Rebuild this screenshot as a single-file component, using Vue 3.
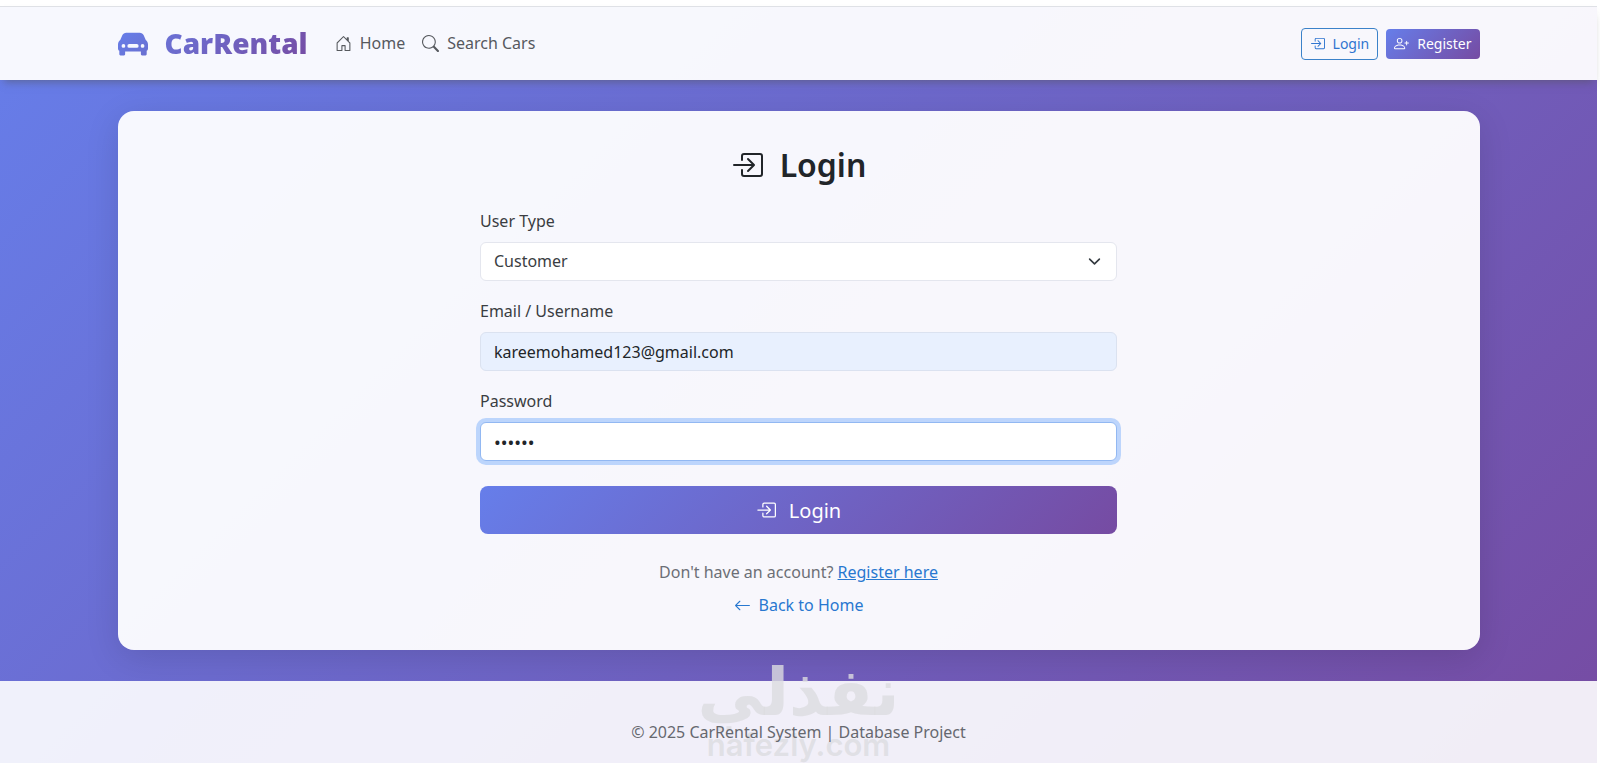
<script setup>
import { ref } from 'vue';

const userType = ref('customer');
const username = ref('kareemohamed123@gmail.com');
const password = ref('secret');

const icons = {
  car: 'M4.4 2h7.2c.9 0 1.7.5 2.1 1.3L14.8 5.9c.6.5 1.2 1.3 1.2 2.4v2.1c0 .6-.3 1-.7 1.2v1.9a.6.6 0 0 1-.6.6h-1.9a.6.6 0 0 1-.6-.6V12H3.8v1.5a.6.6 0 0 1-.6.6H1.3a.6.6 0 0 1-.6-.6v-1.9c-.4-.2-.7-.6-.7-1.2V8.3c0-1.1.6-1.9 1.2-2.4L2.3 3.3C2.7 2.5 3.5 2 4.4 2zM2.9 10a1 1 0 1 0 0-2 1 1 0 0 0 0 2m10.2 0a1 1 0 1 0 0-2 1 1 0 0 0 0 2M6 8a1 1 0 0 0 0 2h4a1 1 0 1 0 0-2z',
  house:
    'M8.354 1.146a.5.5 0 0 0-.708 0l-6 6A.5.5 0 0 0 1.5 7.5v7a.5.5 0 0 0 .5.5h4.5a.5.5 0 0 0 .5-.5v-4h2v4a.5.5 0 0 0 .5.5H14a.5.5 0 0 0 .5-.5v-7a.5.5 0 0 0-.146-.354L13 5.793V2.5a.5.5 0 0 0-.5-.5h-1a.5.5 0 0 0-.5.5v1.293zM2.5 14V7.707l5.5-5.5 5.5 5.5V14H10v-4a.5.5 0 0 0-.5-.5h-3a.5.5 0 0 0-.5.5v4z',
  search:
    'M11.742 10.344a6.5 6.5 0 1 0-1.397 1.398h-.001q.044.06.098.115l3.85 3.85a1 1 0 0 0 1.415-1.414l-3.85-3.85a1 1 0 0 0-.115-.1zM12 6.5a5.5 5.5 0 1 1-11 0 5.5 5.5 0 0 1 11 0',
  login:
    'M6 3.5a.5.5 0 0 1 .5-.5h8a.5.5 0 0 1 .5.5v9a.5.5 0 0 1-.5.5h-8a.5.5 0 0 1-.5-.5v-2a.5.5 0 0 0-1 0v2A1.5 1.5 0 0 0 6.5 14h8a1.5 1.5 0 0 0 1.5-1.5v-9A1.5 1.5 0 0 0 14.5 2h-8A1.5 1.5 0 0 0 5 3.5v2a.5.5 0 0 0 1 0zM11.854 8.354a.5.5 0 0 0 0-.708l-3-3a.5.5 0 1 0-.708.708L10.293 7.5H1.5a.5.5 0 0 0 0 1h8.793l-2.147 2.146a.5.5 0 0 0 .708.708z',
  personPlus:
    'M6 8a3 3 0 1 0 0-6 3 3 0 0 0 0 6m2-3a2 2 0 1 1-4 0 2 2 0 0 1 4 0m4 8c0 1-1 1-1 1H1s-1 0-1-1 1-4 6-4 6 3 6 4m-1-.004c-.001-.246-.154-.986-.832-1.664C9.516 10.68 8.289 10 6 10s-3.516.68-4.168 1.332c-.678.678-.83 1.418-.832 1.664zM13.5 5a.5.5 0 0 1 .5.5V7h1.5a.5.5 0 0 1 0 1H14v1.5a.5.5 0 0 1-1 0V8h-1.5a.5.5 0 0 1 0-1H13V5.5a.5.5 0 0 1 .5-.5',
  arrowLeft:
    'M15 8a.5.5 0 0 0-.5-.5H2.707l3.147-3.146a.5.5 0 1 0-.708-.708l-4 4a.5.5 0 0 0 0 .708l4 4a.5.5 0 0 0 .708-.708L2.707 8.5H14.5A.5.5 0 0 0 15 8',
};
</script>

<template>
  <div class="page">
    <!-- Navbar -->
    <header class="navbar">
      <div class="container nav-row">
        <a href="#" class="brand">
          <svg class="brand-icon" viewBox="0 0 16 16" aria-hidden="true">
            <defs>
              <linearGradient id="brandFill" x1="0" y1="0" x2="1" y2="1">
                <stop offset="0" stop-color="#667eea" />
                <stop offset="1" stop-color="#6a70d0" />
              </linearGradient>
            </defs>
            <path :d="icons.car" fill="url(#brandFill)" fill-rule="evenodd" />
          </svg>
          <span class="brand-text">CarRental</span>
        </a>
        <nav class="nav-links">
          <a href="#" class="nav-link">
            <svg class="icon" viewBox="0 0 16 16"><path :d="icons.house" /></svg>
            Home
          </a>
          <a href="#" class="nav-link">
            <svg class="icon" viewBox="0 0 16 16"><path :d="icons.search" /></svg>
            Search Cars
          </a>
        </nav>
        <div class="nav-actions">
          <a href="#" class="btn-sm btn-outline">
            <svg class="icon" viewBox="0 0 16 16"><path :d="icons.login" /></svg>
            Login
          </a>
          <a href="#" class="btn-sm btn-gradient">
            <svg class="icon" viewBox="0 0 16 16"><path :d="icons.personPlus" /></svg>
            Register
          </a>
        </div>
      </div>
    </header>

    <!-- Login card -->
    <main class="container card">
      <h2 class="title">
        <svg class="icon" viewBox="0 0 16 16"><path :d="icons.login" /></svg>
        Login
      </h2>
      <form class="form" @submit.prevent>
        <div class="field">
          <label for="userType">User Type</label>
          <select id="userType" v-model="userType" class="control select">
            <option value="customer">Customer</option>
            <option value="admin">Admin</option>
          </select>
        </div>
        <div class="field">
          <label for="username">Email / Username</label>
          <input id="username" v-model="username" type="text" class="control filled" />
        </div>
        <div class="field">
          <label for="password">Password</label>
          <input id="password" v-model="password" type="password" class="control focused" />
        </div>
        <button type="submit" class="submit btn-gradient">
          <svg class="icon" viewBox="0 0 16 16"><path :d="icons.login" /></svg>
          Login
        </button>
      </form>
      <p class="note">Don't have an account? <a href="#">Register here</a></p>
      <a href="#" class="back">
        <svg class="icon" viewBox="0 0 16 16"><path :d="icons.arrowLeft" /></svg>
        Back to Home
      </a>
    </main>

    <!-- Footer -->
    <footer class="footer">
      <div class="watermark" aria-hidden="true">
        <span class="mark-ar" lang="ar">نفذلي</span>
        <span class="mark-en">nafezly.com</span>
      </div>
      <p class="copy">© 2025 CarRental System | Database Project</p>
    </footer>
  </div>
</template>

<style>
body {
  margin: 0;
  background: #fff;
}
</style>

<style scoped>
* {
  box-sizing: border-box;
}

.page {
  display: flex;
  flex-direction: column;
  min-height: calc(100vh - 6px);
  margin: 6px 3px 0 0;
  font-family: 'Noto Sans', 'Open Sans', sans-serif;
  font-size: 16px;
  line-height: 25px;
  color: #212529;
  background: linear-gradient(135deg, #667eea 0%, #764ba2 100%);
}

.container {
  width: calc(100% - 48px);
  max-width: 1362px;
  margin: 0 auto;
}

.icon {
  flex: none;
  width: 1em;
  height: 1em;
  fill: currentColor;
}

.navbar {
  padding: 16px 0;
  border-top: 1px solid #dfe1e6;
  background: rgba(255, 255, 255, 0.95);
  box-shadow: 0 6px 8px -4px rgba(80, 80, 80, 0.5);
}

.nav-row {
  display: flex;
  align-items: center;
  height: 41px;
}

.brand {
  display: flex;
  align-items: center;
  gap: 17px;
  text-decoration: none;
}

.brand-icon {
  width: 30px;
  height: 30px;
}

.brand-text {
  font-family: 'Open Sans', 'Noto Sans', sans-serif;
  font-size: 28px;
  font-weight: 800;
  line-height: 41px;
  color: transparent;
  background: linear-gradient(135deg, #6a74d8 0%, #764ba2 100%);
  background-clip: text;
}

.nav-links {
  display: flex;
  gap: 17px;
  margin-left: 27px;
}

.nav-link {
  display: flex;
  align-items: center;
  gap: 8px;
  color: #56595e;
  text-decoration: none;
}

.nav-link .icon {
  width: 17px;
  height: 17px;
}

.nav-actions {
  display: flex;
  align-items: center;
  gap: 8px;
  margin-left: auto;
}

.btn-sm {
  display: flex;
  align-items: center;
  gap: 8px;
  height: 30px;
  padding: 0 8px;
  border-radius: 4px;
  font-size: 14px;
  text-decoration: none;
}

.btn-sm .icon {
  width: 15px;
  height: 15px;
}

.btn-outline {
  height: 32px;
  padding: 0 8px;
  border: 1px solid #3b82c9;
  color: #2f75d0;
}

.btn-gradient {
  color: #fff;
  background: linear-gradient(135deg, #667eea 0%, #764ba2 100%);
}

.card {
  margin-top: 31px;
  margin-bottom: 31px;
  padding: 34px 34px 32px;
  border-radius: 16px;
  background: rgba(255, 255, 255, 0.95);
  box-shadow: 0 8px 34px rgba(0, 0, 0, 0.12);
}

.title {
  display: flex;
  align-items: center;
  justify-content: center;
  gap: 17px;
  margin: 0 0 24px;
  font-size: 32px;
  font-weight: 600;
  line-height: 40px;
}

.form {
  width: 100%;
  max-width: 637px;
  margin: 0 auto;
}

.field {
  margin-bottom: 18px;
}

.field label {
  display: block;
  margin-bottom: 8px;
  color: #3a3d42;
}

.control {
  display: block;
  width: 100%;
  height: 39px;
  padding: 0 13px;
  border: 1px solid #e4e6ee;
  border-radius: 6px;
  outline: none;
  font: inherit;
  color: #212529;
  background: #fff;
}

.select {
  appearance: none;
  color: #3a3d42;
  background: #fff
    url("data:image/svg+xml,%3csvg xmlns='http://www.w3.org/2000/svg' viewBox='0 0 16 16'%3e%3cpath fill='none' stroke='%23343a40' stroke-linecap='round' stroke-linejoin='round' stroke-width='2' d='m2 5 6 6 6-6'/%3e%3c/svg%3e")
    no-repeat right 13px center / 17px 13px;
}

.filled {
  border-color: #dbe2f0;
  background: #e8f0fe;
}

.focused {
  border-color: #92b8f2;
  font-size: 18px;
  box-shadow: 0 0 0 4px rgba(13, 110, 253, 0.25);
}

.submit {
  display: flex;
  align-items: center;
  justify-content: center;
  gap: 13px;
  width: 100%;
  height: 48px;
  margin-top: 25px;
  border: 0;
  border-radius: 8px;
  font-family: inherit;
  font-size: 20px;
  cursor: pointer;
}

.note {
  margin: 26px 0 8px;
  text-align: center;
  color: #6c6f76;
}

.note a,
.back {
  color: #2878d0;
}

.back {
  display: flex;
  align-items: center;
  justify-content: center;
  gap: 8px;
  width: fit-content;
  margin: 0 auto;
  text-decoration: none;
}

.back .icon {
  width: 17px;
  height: 17px;
}

.footer {
  position: relative;
  flex: 1;
  padding: 39px 0 18px;
  background: rgba(255, 255, 255, 0.9);
}

.copy {
  position: relative;
  margin: 0;
  text-align: center;
  color: #66686f;
}

/* stamp laid over the edge between the page and the footer */
.watermark {
  position: absolute;
  top: -24px;
  left: 0;
  right: 0;
  display: flex;
  flex-direction: column;
  align-items: center;
  color: rgba(220, 220, 224, 0.8);
  pointer-events: none;
}

.mark-ar {
  font-family: 'DejaVu Sans', sans-serif;
  font-size: 66px;
  font-weight: 700;
  line-height: 72px;
}

.mark-en {
  font-family: 'Inter', sans-serif;
  font-size: 31px;
  font-weight: 600;
  line-height: 32px;
}
</style>
